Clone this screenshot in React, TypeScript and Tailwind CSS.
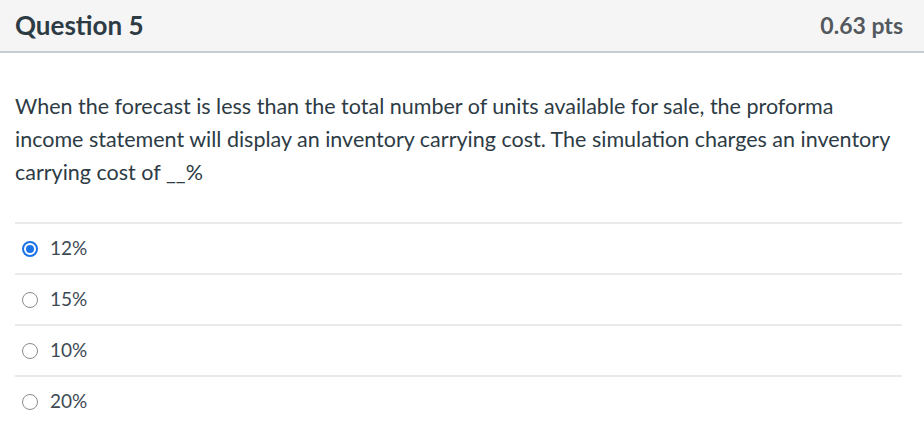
const options = [
  { id: "a", label: "12%", checked: true },
  { id: "b", label: "15%", checked: false },
  { id: "c", label: "10%", checked: false },
  { id: "d", label: "20%", checked: false },
];

function Radio({ checked }: { checked: boolean }) {
  if (checked) {
    return (
      <span className="flex h-[16px] w-[16px] items-center justify-center rounded-full border-2 border-[#1a73e8] bg-white">
        <span className="h-[8px] w-[8px] rounded-full bg-[#1a73e8]" />
      </span>
    );
  }
  return (
    <span className="h-[16px] w-[16px] rounded-full border border-[#8b8b8b] bg-white" />
  );
}

export default function App() {
  return (
    <div
      className="min-h-screen w-[924px] bg-white text-[#2d3b45]"
      style={{ fontFamily: "Lato, 'Open Sans', sans-serif" }}
    >
      <div className="flex h-[53px] items-center justify-between border-b-2 border-[#c7cdd1] bg-[#f5f5f5] pl-[15px] pr-[21px]">
        <h2 className="text-[26px] font-bold text-[#2d3b45]">Question 5</h2>
        <span className="text-[23px] font-bold text-[#53595e]">0.63 pts</span>
      </div>

      <div className="pl-[15px] pr-[22px]">
        <p className="pt-[37px] text-[21.5px] leading-[33px]">
          When the forecast is less than the total number of units available
          for sale, the proforma income statement will display an inventory
          carrying cost. The simulation charges an inventory carrying cost of
          __%
        </p>

        <div className="mt-[33px]">
          {options.map((opt) => (
            <label
              key={opt.id}
              className="flex h-[51px] items-center gap-[12px] border-t-2 border-[#e8eaec] pl-[7px]"
            >
              <Radio checked={opt.checked} />
              <span className="text-[19px] text-[#3d4a54]">{opt.label}</span>
            </label>
          ))}
        </div>
      </div>
    </div>
  );
}
